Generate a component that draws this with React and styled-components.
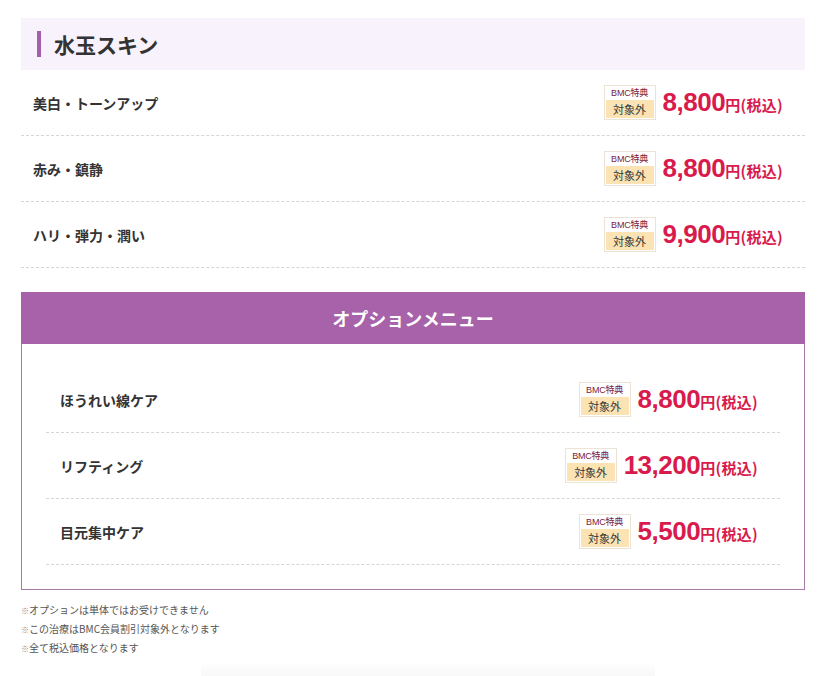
import React from 'react';
import styled, { createGlobalStyle } from 'styled-components';

const GlobalStyle = createGlobalStyle`
body {
  margin: 0;
  background: #fff;
  font-family: "Noto Sans CJK JP", "Noto Sans", sans-serif;
  color: #333;
}
`;

const Page = styled.div`
padding: 18px 25px 0 21px;
`;

const Heading = styled.h2`
display: flex;
align-items: center;
height: 52px;
margin: 0;
padding-left: 16px;
background: #f8f2fc;
font-size: 21px;
font-weight: 700;
color: #333;
&::before {
  content: '';
  width: 4px;
  height: 26px;
  margin-right: 13px;
  background: #a35fa8;
}
`;

const List = styled.div`
display: flex;
flex-direction: column;
`;

const Row = styled.div`
display: flex;
align-items: center;
justify-content: space-between;
height: 65px;
padding: 0 22px 0 ${p => p.$inset}px;
border-bottom: 1px dashed #d6d6d6;
`;

const Label = styled.span`
font-size: 14px;
font-weight: 700;
color: #333;
`;

const PriceWrap = styled.div`
display: flex;
align-items: center;
gap: 7px;
`;

const Badge = styled.div`
display: flex;
flex-direction: column;
align-items: center;
width: 50px;
border: 1px solid #ece3d6;
background: #fff;
`;

const BadgeTop = styled.span`
font-family: "Liberation Sans", "Noto Sans CJK JP", sans-serif;
font-size: 9px;
line-height: 13px;
padding-top: 1px;
color: #7a2240;
letter-spacing: -0.2px;
`;

const BadgeBottom = styled.span`
align-self: stretch;
text-align: center;
font-size: 11px;
line-height: 18px;
background: #fbe3b4;
color: #333;
margin: 0 1px 1px;
`;

const Price = styled.span`
display: flex;
align-items: baseline;
color: #d81a4c;
font-weight: 700;
`;

const Amount = styled.span`
font-family: "Liberation Sans", Arial, sans-serif;
font-size: 26px;
letter-spacing: -0.5px;
`;

const Unit = styled.span`
font-size: 15px;
letter-spacing: 0.3px;
`;

const OptionBox = styled.section`
margin-top: 24px;
border: 1px solid #a57aa8;
`;

const OptionHead = styled.div`
height: 52px;
display: flex;
align-items: center;
justify-content: center;
background: #a762aa;
color: #fff;
font-size: 18px;
font-weight: 700;
margin: -1px -1px 0;
`;

const OptionBody = styled.div`
padding: 23px 24px 24px;
`;

const Notes = styled.ul`
list-style: none;
margin: 10px 0 0;
padding: 0;
`;

const Note = styled.li`
height: 19px;
font-size: 10px;
line-height: 19px;
color: #555;
&::before {
  content: '※';
  font-size: 8px;
  line-height: 1;
  color: #888;
}
`;

const Fade = styled.div`
height: 16px;
margin: 5px 150px 0 180px;
background: linear-gradient(#fff, #f7f7f7);
`;

const menu = [
  { name: '美白・トーンアップ', price: '8,800' },
  { name: '赤み・鎮静', price: '8,800' },
  { name: 'ハリ・弾力・潤い', price: '9,900' },
];

const options = [
  { name: 'ほうれい線ケア', price: '8,800' },
  { name: 'リフティング', price: '13,200' },
  { name: '目元集中ケア', price: '5,500' },
];

const Item = ({ name, price, inset }) => (
  <Row $inset={inset}>
    <Label>{name}</Label>
    <PriceWrap>
      <Badge>
        <BadgeTop>BMC特典</BadgeTop>
        <BadgeBottom>対象外</BadgeBottom>
      </Badge>
      <Price>
        <Amount>{price}</Amount>
        <Unit>円(税込)</Unit>
      </Price>
    </PriceWrap>
  </Row>
);

export default function App() {
  return (
    <Page>
      <GlobalStyle />
      <Heading>水玉スキン</Heading>
      <List>
        {menu.map(m => <Item key={m.name} {...m} inset={12} />)}
      </List>
      <OptionBox>
        <OptionHead>オプションメニュー</OptionHead>
        <OptionBody>
          {options.map(m => <Item key={m.name} {...m} inset={14} />)}
        </OptionBody>
      </OptionBox>
      <Notes>
        <Note>オプションは単体ではお受けできません</Note>
        <Note>この治療はBMC会員割引対象外となります</Note>
        <Note>全て税込価格となります</Note>
      </Notes>
      <Fade />
    </Page>
  );
}
